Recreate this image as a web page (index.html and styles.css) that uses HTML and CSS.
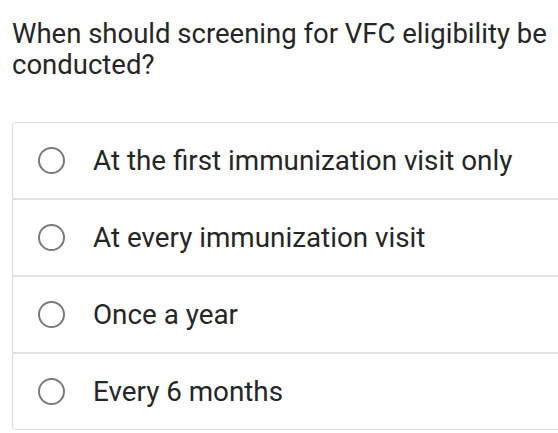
FILE: index.html
```html
<!DOCTYPE html>
<html>
<head>
<meta charset="utf-8">
<link rel="stylesheet" href="styles.css">
</head>
<body>
<div class="page">
  <h1 class="question">When should screening for VFC eligibility be conducted?</h1>
  <div class="options">
    <div class="option"><span class="radio"></span><span class="label">At the first immunization visit only</span></div>
    <div class="option"><span class="radio"></span><span class="label">At every immunization visit</span></div>
    <div class="option"><span class="radio"></span><span class="label">Once a year</span></div>
    <div class="option"><span class="radio"></span><span class="label">Every 6 months</span></div>
  </div>
</div>
</body>
</html>
```

FILE: styles.css
```css
html, body {
  margin: 0;
  padding: 0;
  background: #fff;
}
body {
  font-family: Roboto, "Liberation Sans", sans-serif;
  color: #262626;
  overflow: hidden;
}
.page {
  padding: 18px 0 0 12px;
}
.question {
  margin: 0;
  font-weight: 400;
  font-size: 27.5px;
  line-height: 31px;
  width: 546px;
}
.options {
  margin-top: 42px;
  width: 600px;
  border: 1px solid #dcdcdc;
  border-radius: 4px;
  box-shadow: 0 1px 2px rgba(0,0,0,0.06);
}
.option {
  display: flex;
  align-items: center;
  height: 75px;
  padding-left: 25px;
  border-top: 2px solid #e2e2e2;
}
.option:first-child {
  border-top: none;
}
.radio {
  width: 23px;
  height: 23px;
  border: 2px solid #7a7a7a;
  border-radius: 50%;
  flex: none;
}
.label {
  margin-left: 28px;
  font-size: 27.8px;
  color: #262626;
}
```
